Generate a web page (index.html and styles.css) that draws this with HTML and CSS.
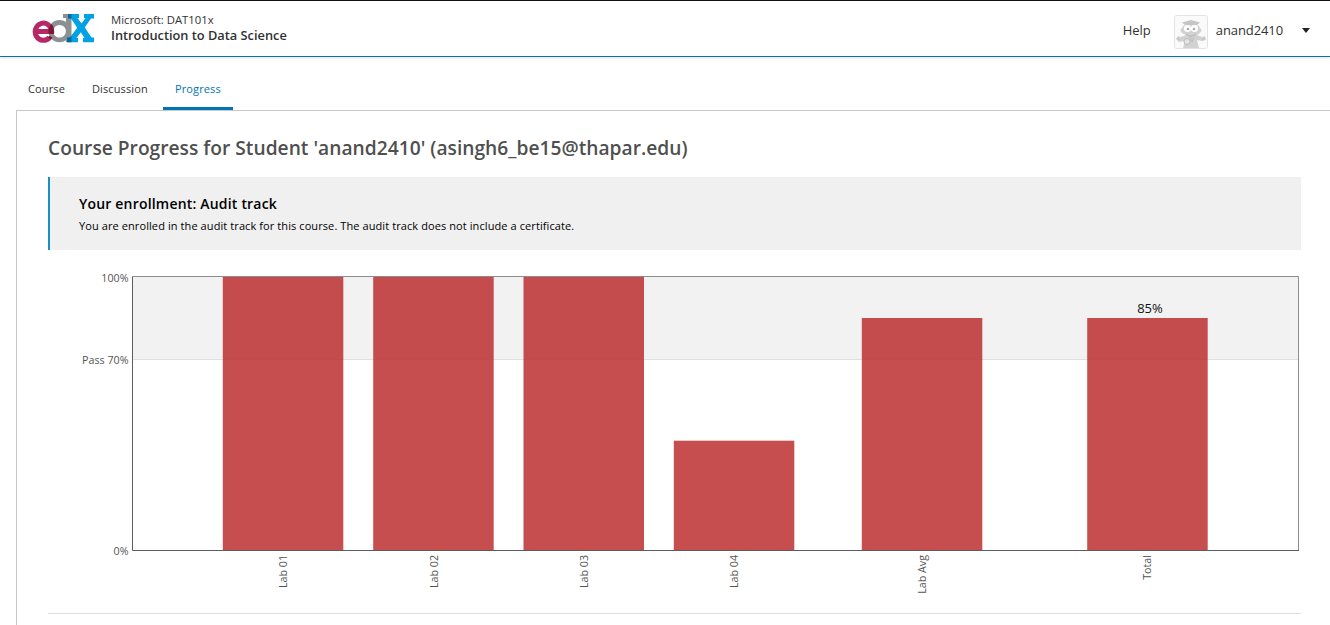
FILE: index.html
```html
<!DOCTYPE html>
<html lang="en">
<head>
<meta charset="utf-8">
<title>Progress | DAT101x</title>
<link rel="stylesheet" href="styles.css">
</head>
<body>
<header class="header">
  <svg class="logo" width="64" height="32" viewBox="32 12 64 32" role="img" aria-label="edX">
    <ellipse cx="59.500" cy="31.200" rx="8.800" ry="8.700" fill="none" stroke="#8d9093" stroke-width="4.800"/>
    <path d="M63 14H71.500V42H66V18H63Z" fill="#8d9093"/>
    <path d="M36 31.500H51.600A8.200 8.600 0 1 0 49.500 37.500" fill="none" stroke="#b72667" stroke-width="5"/>
    <path d="M68 14H79V18H77.500L81.500 23.500L85.500 18H84V14H94V18.500H91L84.800 27.500L91.500 37.500H94V42.300H83V38H84.500L80.800 32.200L76.500 38H78V42.300H67V37.500H70L77.200 27.800L71 18.500H68Z" fill="#00a2e4"/>
    <path d="M68 14H71.500V18.500H68ZM67 37.500H70L71.500 35.500V42.300H67Z" fill="#0b679b"/>
    <path d="M48.600 29.200Q49.500 26 51.500 24Q54.500 27 54 34H48.800Q48.300 31 48.600 29.200Z" fill="#7a1838"/>
    <path d="M49.500 35.700L52.500 37.500L51 39.500L48 37.500Z" fill="#7a1838"/>
  </svg>
  <div class="course">
    <span class="course-number">Microsoft: DAT101x</span>
    <span class="course-name">Introduction to Data Science</span>
  </div>
  <nav class="user">
    <span class="help">Help</span>
    <svg class="avatar" width="34" height="34" viewBox="0 0 34 34">
      <rect x=".5" y=".5" width="33" height="33" rx="2" fill="#fafafa" stroke="#e3e3e3"/>
      <path d="M8 13Q9 9 17 9Q25 9 26 13Q29 15 26 18L23 20L28 22L31 21L32 25L28 26L23 25L25 33H9L11 26L5 27L2 24L4 21L7 22L12 20L8 18Q5 15 8 13Z" fill="#d2d2d2"/>
      <path d="M8 7.500L17 5L26 7.500L23 10H11Z" fill="#c5c5c5"/>
      <ellipse cx="13.500" cy="13.500" rx="3.600" ry="3.400" fill="#fff"/>
      <ellipse cx="20.500" cy="13.500" rx="3.600" ry="3.400" fill="#fff"/>
      <circle cx="14" cy="14" r="1.300" fill="#aaa"/><circle cx="20" cy="14" r="1.300" fill="#aaa"/>
      <path d="M12 19Q17 23.500 22 19" fill="none" stroke="#b3b3b3"/>
      <circle cx="13" cy="26.500" r="3" fill="#e5e5e5" stroke="#bcbcbc"/>
      <path d="M16 22L18 27L20 22M3 23L6 25M28 25L31 23" fill="none" stroke="#bdbdbd"/>
    </svg>
    <span class="username">anand2410</span>
    <svg class="caret" width="8" height="5" viewBox="0 0 8 5"><path d="M0 0H8L4 5Z" fill="#222"/></svg>
  </nav>
</header>
<nav class="tabs">
  <span class="tab tab-course">Course</span>
  <span class="tab tab-discussion">Discussion</span>
  <span class="tab active">Progress</span>
</nav>
<main class="content">
  <h1 class="title">Course Progress for Student 'anand2410' (asingh6_be15@thapar.edu)</h1>
  <section class="enrollment">
    <h2 class="enrollment-title">Your enrollment: Audit track</h2>
    <p class="enrollment-text">You are enrolled in the audit track for this course. The audit track does not include a certificate.</p>
  </section>
  <svg class="chart" width="1253" height="363" viewBox="48 250 1253 363">
    <rect x="133" y="277" width="1165" height="82" fill="#f2f2f2"/>
    <path d="M133 359.500H1298" stroke="#e0e0e0"/>
    <g class="bars">
      <rect x="222.800" y="277" width="120.500" height="273"/>
      <rect x="373.200" y="277" width="120.500" height="273"/>
      <rect x="523.500" y="277" width="120.500" height="273"/>
      <rect x="673.800" y="440.700" width="120.500" height="109.300"/>
      <rect x="861.800" y="318" width="120.500" height="232"/>
      <rect x="1087.200" y="318" width="120.500" height="232"/>
    </g>
    <path d="M132 276.500H1298.500V550" fill="none" stroke="#8c8c8c"/>
    <path d="M132.500 277V550.500H1299" fill="none" stroke="#5c5c5c"/>
    <g class="axis" text-anchor="end">
      <text x="128.500" y="282">100%</text>
      <text x="128.500" y="364">Pass 70%</text>
      <text x="128.500" y="555">0%</text>
      <text transform="translate(287 555) rotate(-90)">Lab 01</text>
      <text transform="translate(438 555) rotate(-90)">Lab 02</text>
      <text transform="translate(588 555) rotate(-90)">Lab 03</text>
      <text transform="translate(738 555) rotate(-90)">Lab 04</text>
      <text transform="translate(926 555) rotate(-90)">Lab Avg</text>
      <text transform="translate(1151 555) rotate(-90)">Total</text>
    </g>
    <text class="total" x="1150" y="313" text-anchor="middle">85%</text>
  </svg>
</main>
</body>
</html>
```
FILE: styles.css
```css
* { box-sizing: border-box; }
body {
  margin: 0;
  height: 625px;
  overflow: hidden;
  background: #fff;
  color: #313131;
  font-family: "Open Sans", sans-serif;
}
.header {
  display: flex;
  height: 57px;
  padding: 0 20px 0 32px;
  border-top: 1px solid #111;
  border-bottom: 1px solid #0075b4;
  box-shadow: 0 1px 3px rgba(0, 0, 0, .12);
}
.logo { margin-top: 11px; }
.course {
  display: flex;
  flex-direction: column;
  margin: 11px 0 0 15px;
  white-space: nowrap;
}
.course-number { font-size: 11.3px; line-height: 16px; }
.course-name { font-size: 12.8px; line-height: 15px; font-weight: 600; }
.user {
  display: flex;
  align-items: center;
  height: 58px;
  margin-left: auto;
  font-size: 13px;
}
.help { margin-right: 23px; }
.username { margin: 0 19px 0 8px; letter-spacing: -.1px; }
.avatar { margin-top: 3px; }
.tabs {
  display: flex;
  height: 53px;
  padding-left: 28px;
  font-size: 11px;
  letter-spacing: .12px;
}
.tab { padding-top: 24px; line-height: 16px; }
.tab-course { width: 64px; }
.tab-discussion { width: 71px; }
.active {
  width: 70px;
  padding-left: 12px;
  border-bottom: 3px solid #0075b4;
  color: #0075b4;
}
.content {
  height: 520px;
  margin-left: 16px;
  padding: 24px 29px 0 31px;
  border: solid #c8c8c8;
  border-width: 1px 0 0 1px;
}
.title {
  margin: 0;
  height: 42px;
  color: #4f4f4f;
  font-size: 19.2px;
  line-height: 26px;
  font-weight: 600;
  letter-spacing: .01px;
  white-space: nowrap;
}
.enrollment {
  height: 73px;
  padding: 17px 29px;
  border-left: 2px solid #1790c7;
  background: #f0f0f0;
  color: #000;
}
.enrollment-title { margin: 0; font-size: 14px; line-height: 20px; font-weight: 600; letter-spacing: .19px; }
.enrollment-text { margin: 4px 0 0; font-size: 11px; line-height: 16px; letter-spacing: .09px; }
.chart { display: block; border-bottom: 1px solid #e0e0e0; height: 364px; }
.bars rect { fill: #bd2f2f; fill-opacity: .85; }
.axis text { fill: #545454; font-size: 10.7px; }
.total { fill: #111; font-size: 13px; }
```
